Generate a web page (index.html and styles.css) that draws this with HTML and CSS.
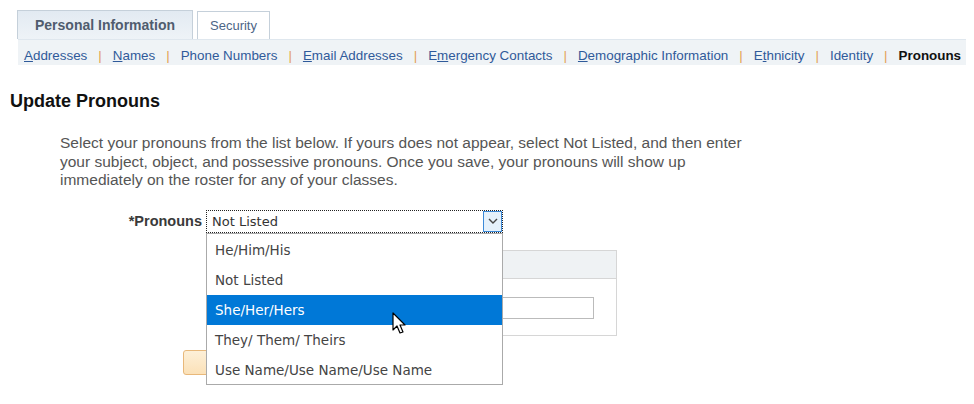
FILE: index.html
```html
<!DOCTYPE html>
<html>
<head>
<meta charset="utf-8">
<link rel="stylesheet" href="styles.css">
</head>
<body>
<div class="tabs">
  <div class="tab tab-active">Personal Information</div>
  <div class="tab">Security</div>
</div>
<nav class="subnav">
  <a class="link"><u>A</u>ddresses</a><span class="sep">|</span>
  <a class="link"><u>N</u>ames</a><span class="sep">|</span>
  <a class="link">Phone Numbers</a><span class="sep">|</span>
  <a class="link"><u>E</u>mail Addresses</a><span class="sep">|</span>
  <a class="link">E<u>m</u>ergency Contacts</a><span class="sep">|</span>
  <a class="link"><u>D</u>emographic Information</a><span class="sep">|</span>
  <a class="link">E<u>t</u>hnicity</a><span class="sep">|</span>
  <a class="link">Identity</a><span class="sep">|</span>
  <span class="current">Pronouns</span>
</nav>
<h1 class="title">Update Pronouns</h1>
<p class="intro">Select your pronouns from the list below. If yours does not appear, select Not Listed, and then enter your subject, object, and possessive pronouns. Once you save, your pronouns will show up immediately on the roster for any of your classes.</p>
<div class="field-row">
  <label class="label">*Pronouns</label>
  <div class="select-wrap">
    <div class="select">
      <span class="select-value">Not Listed</span>
      <span class="select-btn">
        <svg width="10" height="6" viewBox="0 0 10 6"><path d="M1 1 L5 5 L9 1" fill="none" stroke="#444" stroke-width="1.4"/></svg>
      </span>
    </div>
    <ul class="options">
      <li class="option">He/Him/His</li>
      <li class="option">Not Listed</li>
      <li class="option option-hl">She/Her/Hers</li>
      <li class="option">They/ Them/ Theirs</li>
      <li class="option">Use Name/Use Name/Use Name</li>
    </ul>
    <svg class="cursor" width="16" height="24" viewBox="0 0 16 24"><path d="M1 1 L1 18 L5 14 L8 21 L11 20 L8 13 L13 13 Z" fill="#fff" stroke="#000" stroke-width="1.2" stroke-linejoin="round"/></svg>
  </div>
</div>
<div class="detail">
  <div class="grid">
    <div class="grid-head"></div>
    <div class="grid-body"><div class="input"></div></div>
  </div>
  <div class="btn"></div>
</div>
</body>
</html>
```
FILE: styles.css
```css
html, body { margin: 0; padding: 0; background: #fff; }
body { font-family: "Liberation Sans", Arial, sans-serif; width: 974px; height: 404px; overflow: hidden; }

.tabs { display: flex; gap: 4px; padding: 10px 0 0 17px; height: 39px; box-sizing: border-box; align-items: flex-end; }
.tab { height: 28px; box-sizing: border-box; border: 1px solid #c5d0da; border-bottom: none; background: #fff; color: #4d6586; font-size: 13px; padding: 0 12px; display: flex; align-items: center; white-space: nowrap; }
.tab-active { height: 29px; background: linear-gradient(#e2eaf2, #eef3f7); color: #4f5c6e; font-weight: bold; font-size: 14px; padding: 0 10px; width: 176px; justify-content: center; }

.subnav { margin-left: 18px; margin-right: 8px; height: 26px; box-sizing: border-box; padding: 5px 0 0 6px; background: #eff3f6; border-top: 1px solid #dfe7ee; display: flex; align-items: center; font-size: 13.4px; white-space: nowrap; }
.link { color: #2f5a9a; text-decoration: none; }
.link u { text-decoration: underline; }
.sep { color: #e3a052; padding: 0 11px; }
.current { font-weight: bold; color: #111; }

.title { margin: 26px 0 0 10px; font-size: 18px; font-weight: bold; color: #111; line-height: 20px; }
.intro { margin: 23px 0 0 60px; width: 692px; font-size: 15.5px; line-height: 18.5px; color: #555; }

.field-row { display: flex; align-items: center; margin-top: 20px; height: 23px; }
.label { width: 206px; text-align: right; font-weight: bold; font-size: 14.5px; color: #3a3a3a; padding-right: 4px; box-sizing: border-box; }
.select-wrap { position: relative; width: 297px; height: 23px; }
.select { height: 23px; box-sizing: border-box; border: 1px dotted #222; display: flex; align-items: center; background: #fff; }
.select-value { flex: 1; font-family: "DejaVu Sans", Tahoma, sans-serif; font-size: 13px; color: #333; padding-left: 5px; }
.select-btn { width: 19px; height: 21px; box-sizing: border-box; border: 1px solid #3c8ad8; background: #e5f1fb; display: flex; align-items: center; justify-content: center; }

.options { position: absolute; left: 0; top: 23px; width: 297px; height: 152px; box-sizing: border-box; margin: 0; padding: 1px 0 0; list-style: none; background: #fff; border: 1px solid #aaa; z-index: 2; }
.option { height: 30px; display: flex; align-items: center; padding-left: 8px; font-family: "DejaVu Sans", Tahoma, sans-serif; font-size: 13.5px; color: #444; }
.option-hl { background: #0078d7; color: #fff; }
.cursor { position: absolute; left: 186px; top: 102px; z-index: 3; }

.detail { position: relative; margin-left: 183px; margin-top: 17px; height: 130px; }
.grid { margin-left: 23px; width: 411px; height: 86px; box-sizing: border-box; border: 1px solid #d6d6d6; }
.grid-head { height: 27px; background: #eff2f4; border-bottom: 1px solid #d6d6d6; }
.grid-body { padding: 18px 0 0 0; display: flex; justify-content: flex-end; padding-right: 22px; }
.input { width: 300px; height: 22px; box-sizing: border-box; border: 1px solid #bbb; }
.btn { margin-top: 14px; width: 60px; height: 25px; box-sizing: border-box; border: 1px solid #e8b87a; border-radius: 3px; background: linear-gradient(#fdf0d8, #fbe1b8); }
```
